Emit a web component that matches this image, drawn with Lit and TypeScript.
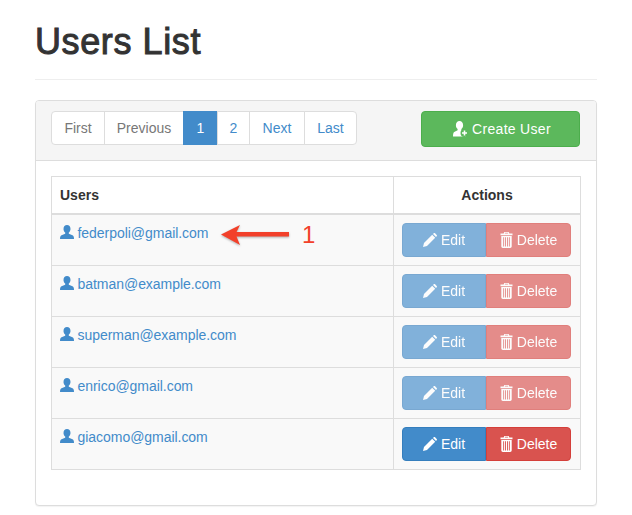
import { LitElement, html, css, svg } from "lit";
import { customElement } from "lit/decorators.js";

const userIcon = html`<svg class="ic" width="14" height="14" viewBox="0 0 14 14" fill="currentColor"><path d="M7 0C4.900 0 3.500 1.700 3.500 3.900c0 1.500.7 2.900 1.700 3.600v1.200L1.500 10.200C.5 10.700 0 11.500 0 14h14c0-2.500-.5-3.300-1.500-3.800L8.800 8.700V7.500c1-.7 1.700-2.100 1.700-3.600C10.500 1.700 9.100 0 7 0z"/></svg>`;
const addIcon = html`<svg class="ic" width="15" height="16" viewBox="0 0 15 16" fill="#fff"><path d="M6.500 0C4.300 0 2.900 1.900 2.900 4.200c0 1.600.7 3 1.700 3.800v1.300L1.200 11C.4 11.500 0 12.800 0 15.500h13c0-2.700-.4-4-1.200-4.500L8.400 9.300V8c1-.8 1.700-2.200 1.700-3.800C10.100 1.900 8.700 0 6.500 0z"/><circle cx="11.500" cy="12" r="4" fill="#5cb85c"/><path d="M10.700 9.500h1.600v1.700H14v1.600h-1.700v1.700h-1.600v-1.700H9v-1.600h1.700z"/></svg>`;
const pencilIcon = html`<svg class="ic" width="14" height="14" viewBox="0 0 14 14" fill="#fff"><path d="M0 14l1-4 8.200-8.200 3 3L4 13zM10 1l.7-.7c.4-.4 1-.4 1.400 0l1.600 1.600c.4.400.4 1 0 1.400l-.7.700z"/></svg>`;
const trashIcon = html`<svg class="ic" width="13" height="16" viewBox="0 0 13 16" fill="#fff"><path fill-rule="evenodd" d="M4.300 0h4.400l.6 1.500h3.200v1.700H.5V1.500h3.200zM5.100.8l-.3.7h3.400L7.900.8zM1.300 4h10.400v10.300c0 .9-.7 1.700-1.500 1.700H2.800c-.8 0-1.500-.8-1.500-1.700zM3.200 5.200v9.300h.9V5.200zm1.900 0v9.300H6V5.200zm1.900 0v9.300h.9V5.200zm1.900 0v9.300h.9V5.200z"/></svg>`;

const arrow = svg`<path d="M0 9.500 L19 0 L15.500 7 L68 7 L68 11.500 L15.500 11.500 L19 20 Z" fill="#f2402a"/>`;

const users = ["federpoli@gmail.com", "batman@example.com", "superman@example.com", "enrico@gmail.com", "giacomo@gmail.com"];

@customElement("app-root")
export class AppRoot extends LitElement {
  static styles = css`
    :host { display: block; font-family: "Liberation Sans", Arial, sans-serif; font-size: 14px; line-height: 20px; color: #333; background: #fff; }
    * { box-sizing: border-box; }
    .page { padding: 0 35px 9px; }
    .header { padding: 22px 0 17px; margin-bottom: 20px; border-bottom: 1px solid #eee; }
    h1 { margin: 0; font-size: 36px; line-height: 40px; font-weight: 400; color: #333; letter-spacing: .6px; -webkit-text-stroke: 1px #333; }
    .panel { border: 1px solid #ddd; border-radius: 4px; box-shadow: 0 1px 1px rgba(0,0,0,.05); background: #fff; }
    .head { display: flex; justify-content: space-between; align-items: flex-start; padding: 10px 16px 13px 15px; background: #f5f5f5; border-bottom: 1px solid #ddd; border-radius: 3px 3px 0 0; }
    .pager { display: grid; grid-template-columns: 54px 79px 34px 32px 55px 52px; height: 34px; }
    .pager a { display: block; padding: 6px 0; text-align: center; border: 1px solid #ddd; margin-left: -1px; background: #fff; color: #428bca; }
    .pager a:first-child { margin-left: 0; border-radius: 4px 0 0 4px; }
    .pager a:last-child { border-radius: 0 4px 4px 0; }
    .pager a.off { color: #777; }
    .pager a.on { background: #428bca; border-color: #428bca; color: #fff; }
    .create { display: flex; align-items: center; justify-content: center; gap: 4px; padding-left: 3px; width: 159px; height: 36px; background: #5cb85c; border: 1px solid #4cae4c; border-radius: 4px; color: #fff; letter-spacing: .3px; }
    .body { padding: 15px 15px 35px; }
    table { width: 530px; border-collapse: collapse; table-layout: fixed; }
    th, td { border: 1px solid #ddd; padding: 8px; vertical-align: top; }
    th { text-align: left; font-weight: 700; border-bottom-width: 2px; }
    th.act { text-align: center; width: 187px; }
    td { background: #f9f9f9; height: 51px; position: relative; }
    .mail { color: #428bca; display: flex; align-items: flex-start; gap: 3.5px; letter-spacing: -.04px; }
    .mail .ic { margin-top: 2px; }
    .group { display: grid; grid-template-columns: 84px 85px; width: 169px; height: 34px; }
    .group.dim { opacity: .65; }
    .btn { display: flex; align-items: center; justify-content: center; gap: 4px; color: #fff; border: 1px solid; }
    .edit { background: #428bca; border-color: #357ebd; border-radius: 4px 0 0 4px; }
    .del { background: #d9534f; border-color: #d43f3a; border-radius: 0 4px 4px 0; }
    .note { position: absolute; left: 169px; top: 6px; display: flex; align-items: center; gap: 13px; color: #f2402a; font-size: 24px; line-height: 28px; }
    .note svg { filter: drop-shadow(0 1px 1px rgba(0,0,0,.3)); }
  `;

  render() {
    return html`
      <div class="page">
        <div class="header"><h1>Users List</h1></div>
        <div class="panel">
          <div class="head">
            <div class="pager">
              <a class="off">First</a><a class="off">Previous</a><a class="on">1</a><a>2</a><a>Next</a><a>Last</a>
            </div>
            <div class="create">${addIcon}<span>Create User</span></div>
          </div>
          <div class="body">
            <table>
              <thead><tr><th>Users</th><th class="act">Actions</th></tr></thead>
              <tbody>
                ${users.map((u, i) => html`
                  <tr>
                    <td>
                      <div class="mail">${userIcon}<span>${u}</span></div>
                      ${i === 0 ? html`<div class="note"><svg width="68" height="21" viewBox="0 0 68 21">${arrow}</svg><span>1</span></div>` : ""}
                    </td>
                    <td>
                      <div class="group ${i < 4 ? "dim" : ""}">
                        <div class="btn edit">${pencilIcon}<span>Edit</span></div>
                        <div class="btn del">${trashIcon}<span>Delete</span></div>
                      </div>
                    </td>
                  </tr>`)}
              </tbody>
            </table>
          </div>
        </div>
      </div>
    `;
  }
}
